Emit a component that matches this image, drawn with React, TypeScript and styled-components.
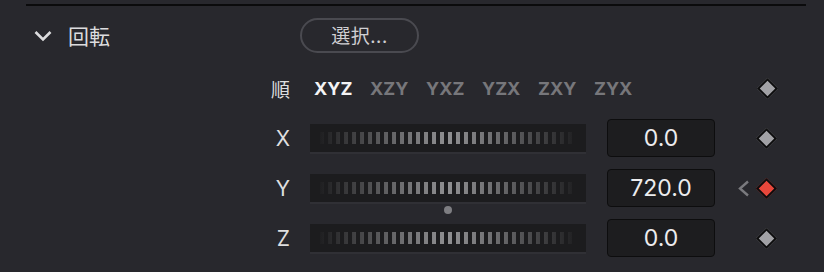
import { FC } from 'react';
import styled, { createGlobalStyle } from 'styled-components';

const GlobalStyle = createGlobalStyle`
  body {
    margin: 0;
    background: #28282d;
  }
`;

const SPanel = styled.div`
  width: 824px;
  height: 272px;
  background: #28282d;
  font-family: Inter, 'Liberation Sans', 'Noto Sans CJK JP', sans-serif;
  color: #e2e2e4;
  overflow: hidden;
`;

const STopRule = styled.div`
  height: 2px;
  margin: 4px 18px 0 26px;
  background: #0b0b0c;
`;

const SHeader = styled.div`
  height: 57px;
  padding-top: 1px;
  box-sizing: border-box;
  display: flex;
  align-items: center;
`;

const SChevron = styled.svg`
  margin-left: 33px;
  margin-top: 2px;
  width: 20px;
  height: 14px;
`;

const STitle = styled.div`
  width: 232px;
  margin-left: 15px;
  font-size: 21px;
  line-height: 1;
  color: #dcdcde;
  font-family: 'Noto Sans CJK JP', sans-serif;
`;

const SPillButton = styled.button`
  width: 119px;
  height: 35px;
  border-radius: 18px;
  border: 2px solid #4a4a50;
  background: transparent;
  color: #cfcfd2;
  font-size: 19px;
  line-height: 1;
  font-family: 'Noto Sans CJK JP', sans-serif;
  padding: 0 0 2px;
  letter-spacing: 0.5px;
`;

const SRow = styled.div`
  height: 50px;
  display: flex;
  align-items: center;
`;

const SLabel = styled.div`
  width: 290px;
  text-align: right;
  font-size: 21px;
  color: #dededf;
  font-family: Inter, 'Noto Sans CJK JP', sans-serif;
`;

const SOrderLabel = styled(SLabel)`
  font-family: 'Noto Sans CJK JP', sans-serif;
  font-size: 19px;
  padding-right: 1px;
`;

const SOptions = styled.div`
  width: 405px;
  margin-left: 20px;
  padding-left: 3px;
  box-sizing: border-box;
  display: flex;
`;

const SOption = styled.span<{ $active?: boolean }>`
  width: 56px;
  font-size: 18px;
  font-weight: 700;
  color: ${(p) => (p.$active ? '#f4f4f5' : '#77777b')};
`;

const SSlider = styled.div`
  position: relative;
  width: 276px;
  height: 28px;
  margin-left: 20px;
  background: #1c1c1e;
  box-shadow: 0 2px 0 #303035;
`;

const STicks = styled.div`
  width: 256px;
  height: 12px;
  margin: 8px 0 0 10px;
  background: linear-gradient(
    to right,
    #1f1f21 0%,
    #6e6e70 32%,
    #909092 50%,
    #6e6e70 68%,
    #1f1f21 100%
  );
  mask-image: repeating-linear-gradient(to right, #000 0 4px, transparent 4px 8px);
  -webkit-mask-image: repeating-linear-gradient(to right, #000 0 4px, transparent 4px 8px);
`;

const SCenterDot = styled.div`
  position: absolute;
  left: 134px;
  top: 32px;
  width: 8px;
  height: 8px;
  border-radius: 50%;
  background: #7e7e82;
  z-index: 1;
`;

const SValueBox = styled.div`
  width: 108px;
  height: 38px;
  margin-left: 21px;
  box-sizing: border-box;
  border: 1.5px solid #0d0d0e;
  border-radius: 4px;
  background: #1d1d1f;
  display: flex;
  align-items: center;
  justify-content: center;
  font-size: 23px;
  color: #ececee;
  font-family: Inter, 'Liberation Sans', sans-serif;
`;

const SKeys = styled.div`
  margin-left: 22px;
  display: flex;
  align-items: center;
`;

const SArrowSlot = styled.div`
  width: 14px;
  height: 18px;
  margin-right: 5px;
  display: flex;
  align-items: center;
`;

const SDiamond = styled.div<{ $on?: boolean }>`
  width: 15px;
  height: 15px;
  margin: 0 3px;
  transform: rotate(45deg);
  box-sizing: border-box;
  border: 2px solid #0c0c0d;
  background: ${(p) => (p.$on ? '#e8473b' : '#a2a2a6')};
`;

const orders = ['XYZ', 'XZY', 'YXZ', 'YZX', 'ZXY', 'ZYX'];

const Keys: FC<{ on?: boolean }> = ({ on }) => (
  <SKeys>
    <SArrowSlot>
      {on && (
        <svg width="13" height="17" viewBox="0 0 13 17">
          <path d="M11 1.5 L3 8.5 L11 15.5" fill="none" stroke="#7a7a7e" strokeWidth="2.4" />
        </svg>
      )}
    </SArrowSlot>
    <SDiamond $on={on} />
  </SKeys>
);

const AxisRow: FC<{ axis: string; value: string; on?: boolean; dot?: boolean }> = ({
  axis,
  value,
  on,
  dot,
}) => (
  <SRow>
    <SLabel>{axis}</SLabel>
    <SSlider>
      <STicks />
      {dot && <SCenterDot />}
    </SSlider>
    <SValueBox>{value}</SValueBox>
    <Keys on={on} />
  </SRow>
);

const App: FC = () => {
  return (
    <SPanel>
      <GlobalStyle />
      <STopRule />
      <SHeader>
        <SChevron viewBox="0 0 20 14">
          <path d="M2.5 3 L10 10.5 L17.5 3" fill="none" stroke="#dcdcde" strokeWidth="2.6" />
        </SChevron>
        <STitle>回転</STitle>
        <SPillButton>選択...</SPillButton>
      </SHeader>
      <SRow>
        <SOrderLabel>順</SOrderLabel>
        <SOptions>
          {orders.map((o, i) => (
            <SOption key={o} $active={i === 0}>
              {o}
            </SOption>
          ))}
        </SOptions>
        <Keys />
      </SRow>
      <AxisRow axis="X" value="0.0" />
      <AxisRow axis="Y" value="720.0" on dot />
      <AxisRow axis="Z" value="0.0" />
    </SPanel>
  );
};

export default App;
